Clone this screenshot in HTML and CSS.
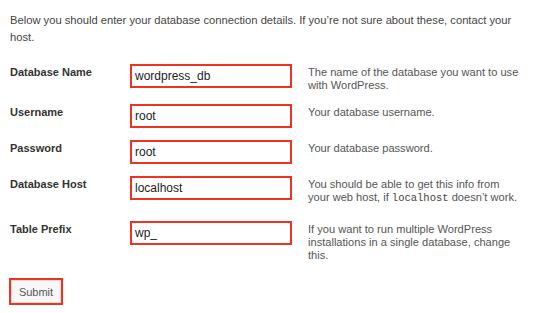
FILE: index.html
```html
<!DOCTYPE html>
<html lang="en">
<head>
<meta charset="utf-8">
<title>Database connection</title>
<link rel="stylesheet" href="styles.css">
</head>
<body>
<div class="page">
  <p class="intro">Below you should enter your database connection details. If you’re not sure about these, contact your host.</p>
  <form class="form-table">
    <label class="label" for="dbname">Database Name</label>
    <input class="field" id="dbname" type="text" value="wordpress_db">
    <p class="desc">The name of the database you want to use with WordPress.</p>

    <label class="label" for="uname">Username</label>
    <input class="field" id="uname" type="text" value="root">
    <p class="desc">Your database username.</p>

    <label class="label" for="pwd">Password</label>
    <input class="field" id="pwd" type="text" value="root">
    <p class="desc">Your database password.</p>

    <label class="label" for="dbhost">Database Host</label>
    <input class="field" id="dbhost" type="text" value="localhost">
    <p class="desc desc-host">You should be able to get this info from your web host, if <code>localhost</code> doesn’t work.</p>

    <label class="label" for="prefix">Table Prefix</label>
    <input class="field" id="prefix" type="text" value="wp_">
    <p class="desc">If you want to run multiple WordPress installations in a single database, change this.</p>
  </form>
  <div class="actions"><button class="submit" type="button">Submit</button></div>
</div>
</body>
</html>
```
FILE: styles.css
```css
html, body {
  margin: 0;
  padding: 0;
  background: #ffffff;
}

.page {
  padding: 0 10px;
  font-family: "Liberation Sans", Arial, sans-serif;
  font-size: 11px;
  color: #444444;
}

.intro {
  margin: 12px 0 0;
  font-size: 11.2px;
  line-height: 17px;
  max-width: 510px;
}

.form-table {
  margin-top: 18px;
  display: grid;
  grid-template-columns: 120px 162px 231px;
  row-gap: 12px;
  align-items: start;
}

.label {
  padding-top: 2px;
  font-weight: bold;
  font-size: 11px;
  line-height: 13px;
  color: #333333;
}

.field {
  box-sizing: border-box;
  width: 162px;
  height: 24px;
  margin: 0;
  padding: 0 3px;
  border: 2px solid #f0331f;
  background: #ffffff;
  font-family: "Liberation Sans", Arial, sans-serif;
  font-size: 12px;
  color: #222222;
  outline: none;
}

.desc {
  margin: 0;
  padding: 2px 0 0 16px;
  font-size: 11.1px;
  line-height: 13px;
  color: #555555;
}

.desc-host {
  padding-bottom: 4px;
}

.desc code {
  font-family: "Liberation Mono", "DejaVu Sans Mono", monospace;
  font-size: 10.5px;
  line-height: 13px;
  color: #444444;
}

.actions {
  margin-top: 16px;
  margin-left: -1px;
}

.submit {
  box-sizing: border-box;
  width: 54px;
  height: 27px;
  margin: 0;
  padding: 0;
  border: 2px solid #f0331f;
  background: #f7f7f7;
  box-shadow: inset 0 0 0 1px #dcdcdc;
  font-family: "Liberation Sans", Arial, sans-serif;
  font-size: 11px;
  color: #555555;
}
```
